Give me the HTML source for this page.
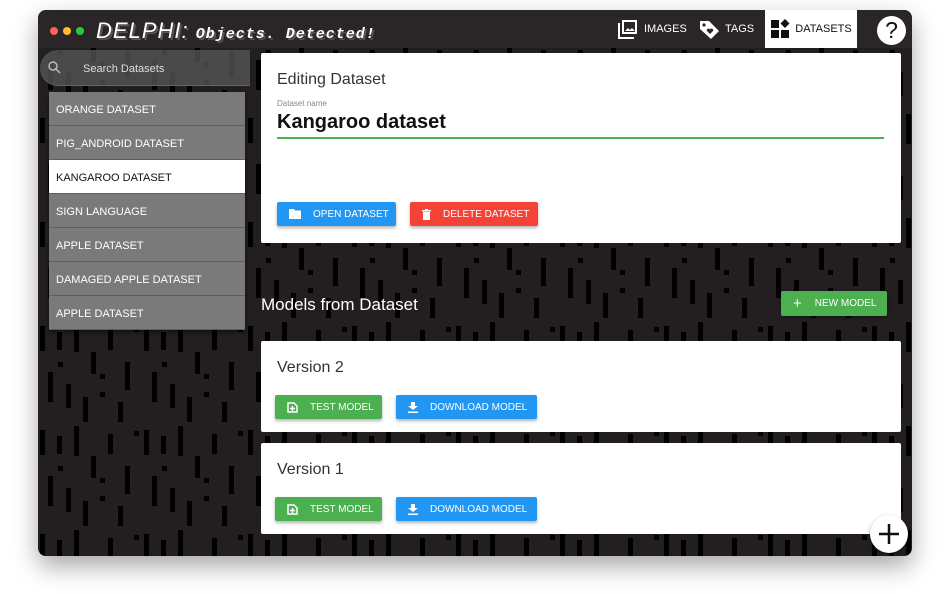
<!DOCTYPE html>
<html><head><meta charset="utf-8"><style>
*{box-sizing:border-box;margin:0;padding:0}
body{width:950px;height:594px;background:#fff;font-family:"Liberation Sans",Arial,sans-serif;position:relative;overflow:hidden}
.win{position:absolute;left:38px;top:10px;width:874px;height:546px;border-radius:8px;overflow:hidden;background:#231f20;box-shadow:0 10px 25px rgba(0,0,0,.35)}
.bg{position:absolute;left:0;top:0;width:100%;height:100%}
.top{position:absolute;left:0;top:0;width:874px;height:38px;background:#2a2627}
.dot{position:absolute;top:17px;width:8px;height:8px;border-radius:50%}
.title{position:absolute;left:58px;top:8px;color:#fff;font-style:italic;font-size:22px;letter-spacing:1px;text-shadow:2px 2px 0 #555}
.title b{font-family:"Liberation Mono",monospace;font-size:15px;font-weight:bold;letter-spacing:1px}
.nav{position:absolute;top:0;height:38px;color:#fff;font-size:11px;display:flex;align-items:center}
.abs{position:absolute}
.search{position:absolute;left:2px;top:40px;width:210px;height:36px;border-radius:18px 0 0 18px;background:rgba(90,90,90,.75);border-bottom:1px solid #666;color:#ddd;font-size:11px}
.list{position:absolute;left:11px;top:82px;width:196px;background:#777;box-shadow:0 2px 4px rgba(0,0,0,.5)}
.list div{height:34px;line-height:36px;padding-left:7px;font-size:11px;color:#fff;border-bottom:1px solid #5e5e5e;background:#7a7a7a}
.list div.sel{background:#fff;color:#111}
.card{position:absolute;left:223px;width:640px;background:#fff;border-radius:2px}
.btn{position:absolute;height:24px;color:#fff;font-size:10px;letter-spacing:0;border-radius:2px;box-shadow:0 2px 3px rgba(0,0,0,.3);display:flex;align-items:center}
.blue{background:#2196f3}.red{background:#f44336}.green{background:#4caf50}
.btn svg{margin:0 12px 0 12px}
</style></head><body>
<div class="win">
<svg class="bg" width="874" height="546"><defs><pattern id="p" width="104" height="104" patternUnits="userSpaceOnUse">
<rect x="2" y="4" width="5" height="25" fill="#000"/><rect x="19" y="10" width="5" height="18" fill="#000"/><rect x="36" y="0" width="5" height="30" fill="#000"/><rect x="53" y="30" width="5" height="22" fill="#000"/><rect x="70" y="8" width="5" height="20" fill="#000"/><rect x="87" y="40" width="5" height="28" fill="#000"/>
<rect x="10" y="50" width="5" height="30" fill="#000"/><rect x="28" y="62" width="5" height="24" fill="#000"/><rect x="45" y="75" width="5" height="25" fill="#000"/><rect x="62" y="70" width="5" height="5" fill="#000"/><rect x="80" y="80" width="5" height="20" fill="#000"/><rect x="96" y="5" width="5" height="5" fill="#000"/>
<rect x="20" y="40" width="5" height="5" fill="#000"/><rect x="62" y="52" width="5" height="5" fill="#000"/></pattern></defs>
<rect width="874" height="546" fill="url(#p)"/></svg>
<div class="top"></div>
<div class="dot" style="left:12px;background:#fe5f57"></div><div class="dot" style="left:25px;background:#febc2e"></div><div class="dot" style="left:38px;background:#28c840"></div>
<div class="title">DELPHI: <b>Objects. Detected!</b></div>
<div class="nav" style="left:580px"><svg width="20" height="20" viewBox="0 0 20 20"><rect x="4" y="1" width="15" height="14" fill="#fff"/><rect x="6" y="3" width="11" height="10" fill="#2a2627"/><path d="M7 12l3-3 2 2 2-2 3 3z" fill="#fff"/><path d="M1 4v15h15" stroke="#fff" stroke-width="2" fill="none"/></svg><span style="margin-left:6px">IMAGES</span></div>
<div class="nav" style="left:661px"><svg width="22" height="20" viewBox="0 0 22 20"><path d="M1 2h9l10 10-8 8L1 10z" fill="#fff"/><circle cx="5" cy="6" r="1.6" fill="#2a2627"/><path d="M11 15l-3-3a1.5 1.5 0 013-1.5 1.5 1.5 0 013 1.5z" fill="#2a2627"/></svg><span style="margin-left:4px">TAGS</span></div>
<div class="nav" style="left:727px;width:92px;background:#fff;color:#111;justify-content:center"><svg width="20" height="20" viewBox="0 0 20 20"><rect x="1" y="1" width="8" height="8" fill="#111"/><rect x="1" y="11" width="8" height="8" fill="#111"/><rect x="11" y="11" width="8" height="8" fill="#111"/><path d="M15 0l4.5 4.5L15 9l-4.5-4.5z" fill="#111"/></svg><span style="margin-left:5px">DATASETS</span></div>
<div class="abs" style="left:839px;top:6px;width:29px;height:29px;border-radius:50%;background:#fff;color:#111;font-size:23px;text-align:center;line-height:29px">?</div>
<div class="search"><svg class="abs" style="left:8px;top:11px" width="13" height="13" viewBox="0 0 13 13"><circle cx="5" cy="5" r="4" stroke="#bbb" stroke-width="1.5" fill="none"/><path d="M8 8l4 4" stroke="#bbb" stroke-width="1.5"/></svg><span class="abs" style="left:43px;top:13px">Search Datasets</span></div>
<div class="list"><div>ORANGE DATASET</div><div>PIG_ANDROID DATASET</div><div class="sel">KANGAROO DATASET</div><div>SIGN LANGUAGE</div><div>APPLE DATASET</div><div>DAMAGED APPLE DATASET</div><div>APPLE DATASET</div></div>
<div class="card" style="top:43px;height:190px">
<div class="abs" style="left:16px;top:18px;font-size:16px;color:#333">Editing Dataset</div>
<div class="abs" style="left:16px;top:46px;font-size:8px;color:#888">Dataset name</div>
<div class="abs" style="left:16px;top:58px;font-size:20px;font-weight:bold;color:#111">Kangaroo dataset</div>
<div class="abs" style="left:16px;top:84px;width:607px;height:2px;background:#4caf50"></div>
<div class="btn blue" style="left:16px;top:149px;width:119px"><svg width="12" height="10" viewBox="0 0 12 10"><path d="M0 0h5l1 1.5h6V10H0z" fill="#fff"/></svg>OPEN DATASET</div>
<div class="btn red" style="left:149px;top:149px;width:128px"><svg width="9" height="11" viewBox="0 0 9 11"><path d="M0 1h9v1.5H0zM3 0h3v1H3zM1 3h7v8H1z" fill="#fff"/></svg>DELETE DATASET</div>
</div>
<div class="abs" style="left:223px;top:285px;color:#fff;font-size:17px">Models from Dataset</div>
<div class="btn green" style="left:743px;top:281px;width:106px;height:25px"><span style="margin:0 13px 0 12px;font-size:15px">+</span>NEW MODEL</div>
<div class="card" style="top:331px;height:91px">
<div class="abs" style="left:16px;top:18px;font-size:16px;color:#333">Version 2</div>
<div class="btn green" style="left:14px;top:54px;width:107px"><svg width="11" height="11" viewBox="0 0 11 11"><path d="M1 1h6l3 3v6H1z" fill="none" stroke="#fff" stroke-width="1.5"/><path d="M5.5 4v5M3 6.5h5" stroke="#fff" stroke-width="1.5"/></svg>TEST MODEL</div>
<div class="btn blue" style="left:135px;top:54px;width:141px"><svg width="10" height="11" viewBox="0 0 10 11"><path d="M3 0h4v4h3L5 8 0 4h3zM0 9.5h10V11H0z" fill="#fff"/></svg>DOWNLOAD MODEL</div>
</div>
<div class="card" style="top:433px;height:91px">
<div class="abs" style="left:16px;top:18px;font-size:16px;color:#333">Version 1</div>
<div class="btn green" style="left:14px;top:54px;width:107px"><svg width="11" height="11" viewBox="0 0 11 11"><path d="M1 1h6l3 3v6H1z" fill="none" stroke="#fff" stroke-width="1.5"/><path d="M5.5 4v5M3 6.5h5" stroke="#fff" stroke-width="1.5"/></svg>TEST MODEL</div>
<div class="btn blue" style="left:135px;top:54px;width:141px"><svg width="10" height="11" viewBox="0 0 10 11"><path d="M3 0h4v4h3L5 8 0 4h3zM0 9.5h10V11H0z" fill="#fff"/></svg>DOWNLOAD MODEL</div>
</div>
<div class="abs" style="left:832px;top:505px;width:38px;height:38px;border-radius:50%;background:#fff;box-shadow:0 2px 4px rgba(0,0,0,.4)"><svg class="abs" style="left:9px;top:9px" width="20" height="20"><path d="M10 0v20M0 10h20" stroke="#111" stroke-width="2.5"/></svg></div>
</div>
</body></html>
